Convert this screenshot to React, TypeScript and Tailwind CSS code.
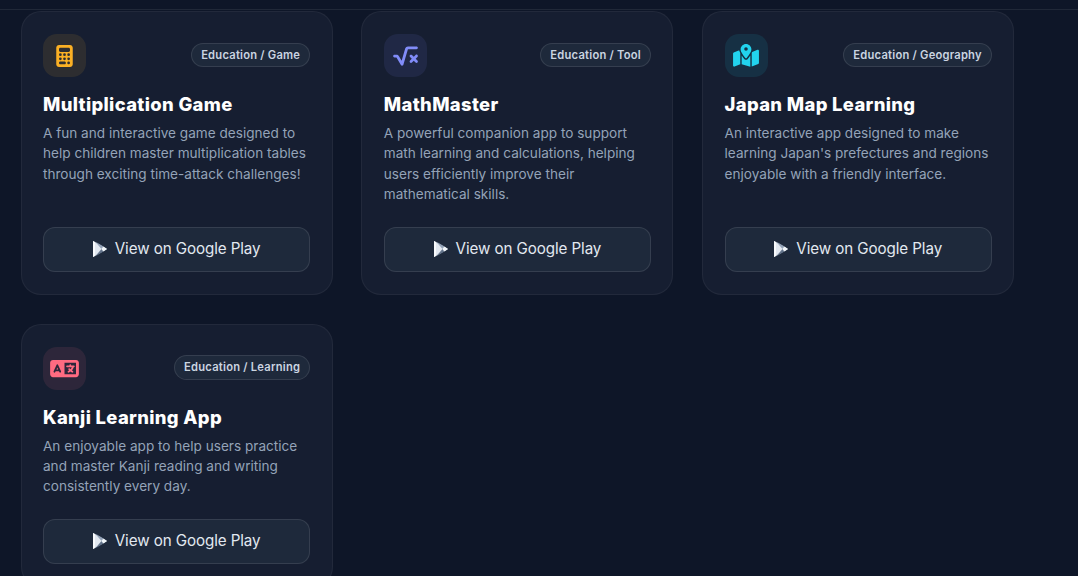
import { FaCalculator, FaSquareRootVariable, FaMapLocationDot, FaLanguage } from "react-icons/fa6";
import type { ReactNode } from "react";

function PlayIcon() {
  return (
    <svg viewBox="0 0 14 16" className="h-[16px] w-[14px]">
      <polygon points="0,0 14,8 0,16" fill="#cbd5e1" />
      <polygon points="0,0 2,1 2,15 0,16" fill="#f8fafc" />
      <polygon points="2,1 8.5,8 2,15" fill="#e2e8f0" />
      <polygon points="2.5,0.8 10.5,5.5 8.5,8" fill="#94a3b8" />
      <polygon points="2.5,15.2 10.5,10.5 8.5,8" fill="#64748b" />
      <polygon points="10.5,5.5 14,8 10.5,10.5 8.5,8" fill="#f1f5f9" />
    </svg>
  );
}

function Card({ icon, iconBox, tag, title, children }: { icon: ReactNode; iconBox: string; tag: string; title: string; children: ReactNode }) {
  return (
    <div className="flex flex-col rounded-[20px] border border-white/[0.05] bg-[#161e31] px-[21.4px] pt-[22px] pb-[22px]">
      <div className="mb-[13px] flex items-start justify-between">
        <div className={`flex h-[43px] w-[43px] items-center justify-center rounded-[14px] ${iconBox}`}>{icon}</div>
        <span className="mt-[8.5px] rounded-full border border-white/10 bg-[#1e293b] px-[9px] py-[3px] text-[11.2px] leading-[16.8px] font-semibold tracking-[0.22px] text-[#cbd5e1]">{tag}</span>
      </div>
      <h3 className="mb-[5px] text-[18.4px] leading-[28px] font-extrabold tracking-[0.35px] text-white">{title}</h3>
      <p className="mb-[22px] flex-1 text-[13.6px] leading-[20.4px] tracking-[0px] text-[#94a3b8]">{children}</p>
      <button className="flex h-[45px] w-full items-center justify-center gap-[8px] rounded-[12px] border border-white/10 bg-[#1e293b] text-[15.2px] tracking-[-0.1px] text-[#e2e8f0]">
        <PlayIcon />
        View on Google Play
      </button>
    </div>
  );
}

export default function App() {
  return (
    <div className="h-[576px] overflow-hidden bg-[#0e1628] font-['Inter','Liberation_Sans',sans-serif]">
      <div className="h-[10px] border-b border-white/[0.08]" />
      <div className="grid grid-cols-3 gap-x-[28.8px] gap-y-[29px] pl-[20.6px] pr-[63.8px] pt-px">
        <Card icon={<FaCalculator className="h-[22px] w-[19px] text-[#fbb024]" />} iconBox="bg-[#fbbf24]/10" tag="Education / Game" title="Multiplication Game">
          A fun and interactive game designed to help children master multiplication tables through exciting time-attack challenges!
        </Card>
        <Card icon={<FaSquareRootVariable className="h-[22px] w-[25px] text-[#818cf8]" />} iconBox="bg-[#818cf8]/10" tag="Education / Tool" title="MathMaster">
          A powerful companion app to support math learning and calculations, helping users efficiently improve their mathematical skills.
        </Card>
        <Card icon={<FaMapLocationDot className="h-[23px] w-[26px] text-[#22d3ee]" />} iconBox="bg-[#22d3ee]/10" tag="Education / Geography" title="Japan Map Learning">
          An interactive app designed to make learning Japan's prefectures and regions enjoyable with a friendly interface.
        </Card>
        <Card icon={<FaLanguage className="h-[23px] w-[29px] text-[#ff6b81]" />} iconBox="bg-[#fb7185]/10" tag="Education / Learning" title="Kanji Learning App">
          An enjoyable app to help users practice and master Kanji reading and writing consistently every day.
        </Card>
      </div>
    </div>
  );
}
